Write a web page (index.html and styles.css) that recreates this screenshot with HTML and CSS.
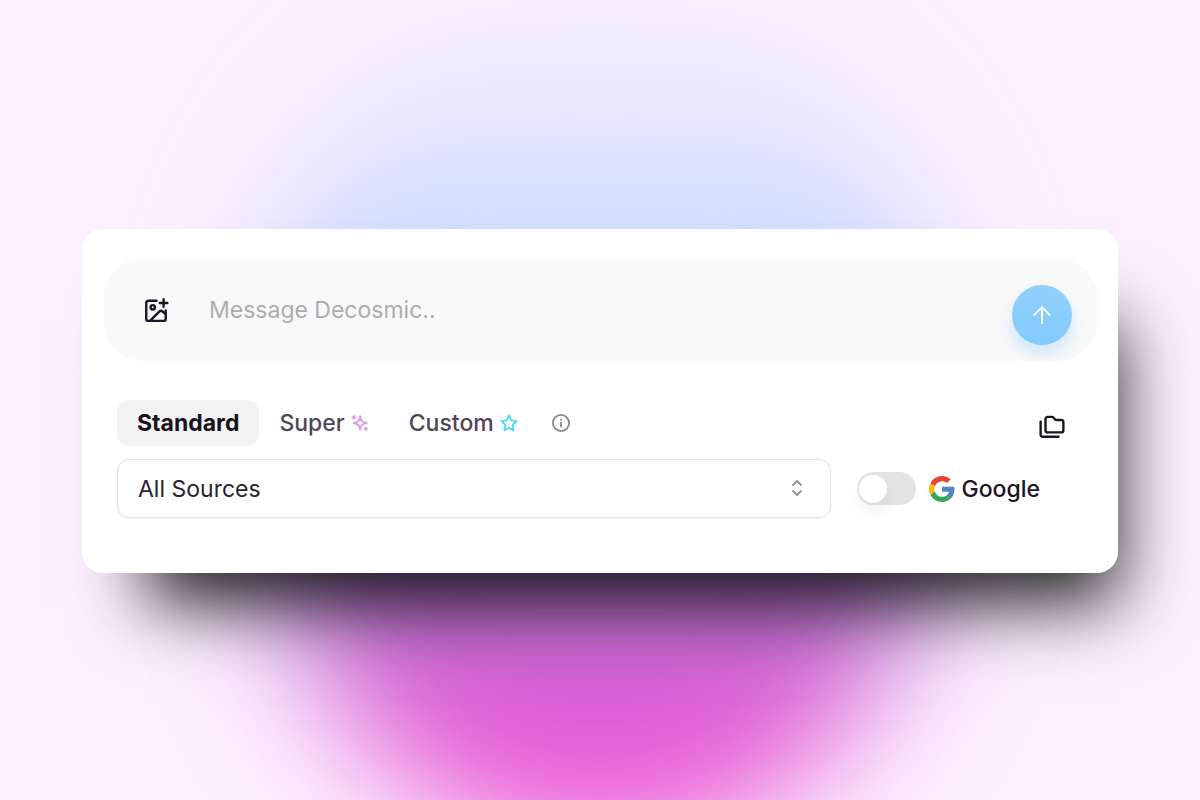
FILE: index.html
```html
<!DOCTYPE html>
<html lang="en">
<head>
<meta charset="utf-8">
<meta name="viewport" content="width=device-width, initial-scale=1">
<title>Decosmic</title>
<link rel="stylesheet" href="styles.css">
</head>
<body>
<main class="page">
  <form class="card">
    <div class="composer">
      <button class="icon-button" type="button" aria-label="Add image">
        <svg class="icon" viewBox="0 0 24 24"><path d="M12.500 3.500H5a2 2 0 0 0-2 2V20a2 2 0 0 0 2 2h14a2 2 0 0 0 2-2v-7.500M15.500 5.500h7M19 2v7M6.500 22l8.500-8.500c1-1 2.200-1 3.200 0l2.800 2.500"/><circle cx="9" cy="9.500" r="2"/></svg>
      </button>
      <input class="message" type="text" placeholder="Message Decosmic.." aria-label="Message">
      <button class="send" type="submit" aria-label="Send">
        <svg class="icon-send" viewBox="0 0 24 24"><path d="M12 21V3.500M3.500 12 12 3.500l8.500 8.500"/></svg>
      </button>
    </div>
    <div class="options">
      <div class="modes">
        <div class="tabs">
          <button class="tab tab-active" type="button" aria-pressed="true">Standard</button>
          <button class="tab" type="button" aria-pressed="false">Super
            <svg class="badge badge-super" viewBox="0 0 20 20"><path d="M10.200 2.500c.8 5 2.200 6.600 7.300 7.500-5.100.9-6.500 2.500-7.300 7.500C9.400 12.500 8 10.900 2.900 10c5.100-.9 6.500-2.500 7.300-7.500z"/><circle class="dot" cx="3.200" cy="3.700" r="1.900"/><circle class="dot" cx="16.500" cy="16.500" r="1.900"/><path class="spark" d="M3.200 1.500v4.400M1 3.700h4.400M16.500 14.300v4.400M14.300 16.500h4.400"/></svg>
          </button>
          <button class="tab" type="button" aria-pressed="false">Custom
            <svg class="badge badge-custom" viewBox="0 0 20 20"><path d="m10 1.500 2.500 5.500 6 .8-4.400 4.200 1.100 6.200-5.200-3-5.200 3 1.100-6.200-4.400-4.200 6-.8z"/></svg>
          </button>
          <button class="info" type="button" aria-label="About modes">
            <svg class="badge" viewBox="0 0 20 20"><circle cx="10" cy="10" r="9"/><path d="M10 9.500v4.500M10 6v.5"/></svg>
          </button>
        </div>
        <button class="icon-button" type="button" aria-label="Collections">
          <svg class="icon" viewBox="0 0 24 24"><path d="M20.500 17a2 2 0 0 0 2-2V7.500a2 2 0 0 0-2-2H16a2 2 0 0 1-1.600-.9l-.7-1a2 2 0 0 0-1.700-.9H8a2 2 0 0 0-2 2V15a2 2 0 0 0 2 2zM1.500 7v12a2 2 0 0 0 2 2H18"/></svg>
        </button>
      </div>
      <div class="filters">
        <div class="select-box">
          <select class="select" aria-label="Sources"><option>All Sources</option></select>
          <svg class="chevrons" viewBox="0 0 20 20"><path d="m6 6 4-4 4 4M6 12l4 4 4-4"/></svg>
        </div>
        <label class="google">
          <input class="switch" type="checkbox">
          <svg class="logo" viewBox="0 0 48 48"><path fill="#EA4335" d="M24 9.500c3.540 0 6.710 1.220 9.210 3.600l6.850-6.850C35.900 2.380 30.470 0 24 0 14.620 0 6.510 5.380 2.560 13.220l7.980 6.190C12.430 13.720 17.740 9.500 24 9.500z"/><path fill="#5683c6" d="M46.980 24.550c0-1.570-.15-3.090-.38-4.550H24v9.020h12.940c-.58 2.960-2.260 5.480-4.780 7.180l7.730 6c4.510-4.180 7.090-10.360 7.090-17.650z"/><path fill="#FBBC05" d="M10.530 28.590c-.48-1.450-.76-2.990-.76-4.590s.27-3.140.76-4.590l-7.980-6.190C.92 16.460 0 20.120 0 24c0 3.880.92 7.540 2.560 10.780z"/><path fill="#34A853" d="M24 48c6.480 0 11.930-2.130 15.890-5.810l-7.730-6c-2.150 1.450-4.920 2.300-8.160 2.300-6.260 0-11.570-4.220-13.470-9.910l-7.980 6.190C6.510 42.620 14.620 48 24 48z"/></svg>
          <span class="google-name">Google</span>
        </label>
      </div>
    </div>
  </form>
</main>
</body>
</html>
```
FILE: styles.css
```css
* { box-sizing: border-box; }

body {
  margin: 0;
  background: #fdf0ff;
  color: #2b1f33;
  font-family: Inter, "Liberation Sans", sans-serif;
  font-size: 23px;
  line-height: 32px;
}

button, input, select { font: inherit; color: inherit; }

button {
  border: 0;
  padding: 0;
  background: none;
  cursor: pointer;
}

svg {
  fill: none;
  stroke: currentColor;
  stroke-width: 2;
  stroke-linecap: round;
  stroke-linejoin: round;
}

.page {
  position: relative;
  z-index: 0;
  display: flex;
  align-items: center;
  min-height: 100vh;
  padding: 2px 82px 0;
  overflow: hidden;
}

.page::before {
  content: "";
  position: absolute;
  z-index: -1;
  top: -10px;
  left: 50%;
  width: 700px;
  height: 860px;
  margin-left: -350px;
  border-radius: 50%;
  background: linear-gradient(rgba(190, 215, 255, 0), rgba(195, 218, 253, .5) 18%, rgba(190, 212, 252, .9) 36%, #b07cd0 66%, #df58d5 83%, #f75dd8);
  filter: blur(62px);
}

.card {
  flex: 1;
  padding: 30px 21px 55px 22px;
  border-radius: 21px;
  background: #fff;
  box-shadow: 32px 62px 68px -32px rgba(0, 0, 0, .86);
}

.composer {
  display: flex;
  align-items: center;
  gap: 27px;
  min-height: 102px;
  padding: 16px 25px 16px 26px;
  border-radius: 38px;
  background: #f9f9f9;
  overflow: hidden;
}

.icon-button {
  display: grid;
  place-items: center;
  width: 52px;
  height: 38px;
  color: #1d1424;
}

.icon {
  width: 26px;
  height: 26px;
  stroke-width: 2.2;
}

.message {
  flex: 1;
  min-width: 0;
  padding: 0;
  border: 0;
  outline: 0;
  background: none;
}

.message::placeholder { color: #b2a9b6; opacity: 1; }

.send {
  display: grid;
  place-items: center;
  align-self: flex-end;
  width: 60px;
  height: 60px;
  border-radius: 50%;
  background: linear-gradient(#93d0fc, #80caff);
  color: #fff;
  box-shadow: 0 10px 16px rgba(150, 205, 255, .4);
}

.icon-send { width: 22px; height: 22px; }

.options {
  display: grid;
  gap: 13px;
  padding: 39px 32px 0 13px;
}

.modes {
  display: flex;
  align-items: flex-end;
  justify-content: space-between;
}

.modes > .icon-button { width: 26px; }

.tabs { display: flex; align-items: center; }

.tab {
  display: flex;
  align-items: center;
  gap: 6px;
  height: 46px;
  padding: 0 20px;
  border-radius: 12px;
  color: #514458;
  font-weight: 500;
}

.tab-active {
  background: #f3f3f3;
  color: #17121c;
  font-weight: 700;
}

.badge { width: 18px; height: 18px; stroke-width: 2; }
.badge-super { color: #dd9bea; }
.badge-custom { color: #4bd8f5; }
.dot { fill: currentColor; stroke: none; }
.spark { stroke-width: 1; }

.info {
  display: grid;
  place-items: center;
  width: 46px;
  height: 46px;
  color: #8d8295;
}

.filters {
  display: flex;
  align-items: center;
  gap: 26px;
}

.select-box { display: grid; flex: 1; align-items: center; }

.select {
  grid-area: 1 / 1;
  width: 100%;
  height: 59px;
  padding: 0 20px;
  border: 1px solid #e2e2e4;
  border-radius: 12px;
  background: #fff;
  box-shadow: 0 1px 2px rgba(0, 0, 0, .06);
  appearance: none;
}

.chevrons {
  grid-area: 1 / 1;
  justify-self: end;
  width: 20px;
  height: 20px;
  margin-right: 24px;
  color: #9a91a1;
  pointer-events: none;
}

.google {
  display: flex;
  align-items: center;
  padding-right: 25px;
  color: #1d1424;
  font-weight: 500;
}

.switch {
  display: flex;
  align-items: center;
  width: 59px;
  height: 33px;
  margin: 0 13px 0 0;
  padding: 0 2px;
  border-radius: 17px;
  background: #e3e3e5;
  appearance: none;
}

.switch::before {
  content: "";
  width: 28px;
  height: 28px;
  border-radius: 50%;
  background: #fff;
  box-shadow: 0 10px 15px rgba(0, 0, 0, .05);
}

.switch:checked { justify-content: flex-end; background: #80caff; }

.logo {
  width: 26px;
  height: 26px;
  margin-right: 6px;
  stroke: none;
}
```
